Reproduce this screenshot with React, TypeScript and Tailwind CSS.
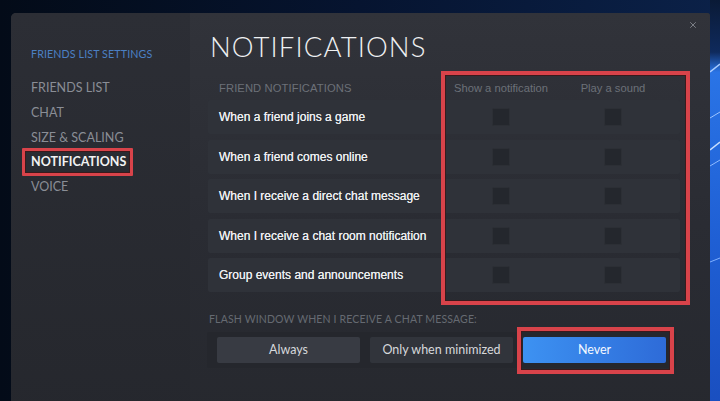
import React from 'react';
import { X } from 'lucide-react';

const menu = ['FRIENDS LIST', 'CHAT', 'SIZE & SCALING', 'NOTIFICATIONS', 'VOICE'];

const rows = [
  'When a friend joins a game',
  'When a friend comes online',
  'When I receive a direct chat message',
  'When I receive a chat room notification',
  'Group events and announcements',
];

const Box: React.FC = () => (
  <div className="w-[18px] h-[18px] rounded-[2px] bg-[#24272d] border border-[#2c2f35]" />
);

const Wallpaper: React.FC = () => (
  <svg width="10" height="401" viewBox="0 0 10 401" className="block">
    <defs>
      <linearGradient id="wp" x1="0" y1="0" x2="0" y2="1">
        <stop offset="0" stopColor="#0a1a36" />
        <stop offset="0.13" stopColor="#0f2a5c" />
        <stop offset="0.18" stopColor="#2a74e6" />
        <stop offset="0.6" stopColor="#1f5fd4" />
        <stop offset="1" stopColor="#1a4fc0" />
      </linearGradient>
    </defs>
    <rect width="10" height="401" fill="url(#wp)" />
    <path d="M0 72 L10 64" stroke="#a9ccff" strokeWidth="1.5" />
    <path d="M0 118 L10 112" stroke="#9cc4ff" strokeWidth="1" />
    <path d="M0 150 L10 142" stroke="#c8defe" strokeWidth="1.5" />
    <path d="M0 166 L10 160" stroke="#8fbaff" strokeWidth="1" />
    <path d="M0 262 L10 258" stroke="#7fb0ff" strokeWidth="1" />
  </svg>
);

const App: React.FC = () => {
  return (
    <div className="w-[720px] h-[401px] overflow-hidden flex bg-gradient-to-r from-[#030b18] via-[#061430] to-[#0b2148] font-['Liberation_Sans',Arial,sans-serif]">
      <div className="w-[11px] shrink-0" />
      <div className="w-[699px] shrink-0 mt-[13px] h-[420px] rounded-tl-[5px] rounded-tr-[3px] overflow-hidden flex bg-[#292b32]">
        {/* sidebar */}
        <div className="w-[179px] shrink-0 bg-gradient-to-b from-[#2c2e35] to-[#25272d] pl-[20px] pt-[34px] font-['Lato',sans-serif]">
          <div className="text-[10.7px] leading-[14px] text-[#4b80c4] tracking-[0.01em]">FRIENDS LIST SETTINGS</div>
          <div className="mt-[15px] flex flex-col">
            {menu.map((m) => (
              <div key={m} className="relative h-[24.8px] flex items-center">
                <span
                  className={
                    m === 'NOTIFICATIONS'
                      ? 'text-[12.5px] font-bold text-[#f2f2f2]'
                      : 'text-[12.5px] text-[#8a8e96]'
                  }
                >
                  {m}
                </span>
                {m === 'NOTIFICATIONS' && (
                  <div className="absolute left-[-9px] top-[-2px] w-[111px] h-[28px] border-[3px] border-[#d8434a] rounded-[1px] shadow-[inset_0_0_0_1px_#3a1a1c]" />
                )}
              </div>
            ))}
          </div>
        </div>

        {/* main */}
        <div className="relative flex-1 bg-gradient-to-b from-[#31333a] via-[#2a2c33] to-[#26282e] pl-[18px] pt-[18px]">
          <X className="absolute right-[12px] top-[7px] w-[10px] h-[10px] text-[#8c8f96]" strokeWidth={2} />
          <div className="h-[32px] flex items-center pl-[2px] text-[27.5px] font-light text-[#eef0f2] tracking-[0.04em] font-['Lato',sans-serif]">
            NOTIFICATIONS
          </div>

          <div className="relative mt-[13px] w-[472px]">
            <div className="grid grid-cols-[1fr_112px_112px] pr-[11px] h-[24px] items-center text-[11.2px] text-[#6c7078]">
              <div className="pl-[11px] uppercase tracking-[0.01em]">Friend Notifications</div>
              <div className="text-center">Show a notification</div>
              <div className="text-center">Play a sound</div>
            </div>
            <div className="flex flex-col gap-[5.5px]">
              {rows.map((r) => (
                <div
                  key={r}
                  className="grid grid-cols-[1fr_112px_112px] pr-[11px] h-[34px] items-center bg-[#2f3239] rounded-[2px]"
                >
                  <div className="pl-[11px] text-[12px] text-[#eceef0] [text-shadow:0_0_0.4px_#eceef0]">{r}</div>
                  <div className="flex justify-center"><Box /></div>
                  <div className="flex justify-center"><Box /></div>
                </div>
              ))}
            </div>
            <div className="absolute left-[233px] top-[-5px] w-[249px] h-[234px] border-[4px] border-[#d8434a] shadow-[inset_0_0_0_1px_#3a1a1c]" />
          </div>

          <div className="mt-[21px] pl-[1px] h-[14px] flex items-center text-[10.5px] text-[#666a72] font-['Lato',sans-serif] tracking-[0.015em]">
            FLASH WINDOW WHEN I RECEIVE A CHAT MESSAGE:
          </div>
          <div className="relative mt-[5px] -ml-[1px] w-[469px] h-[36px] bg-[#25272d] rounded-[2px] px-[10px] flex items-center gap-[10px] font-['Lato',sans-serif] text-[12.5px]">
            <div className="w-[143px] h-[26px] flex items-center justify-center bg-[#383b43] text-[#d6d8db] rounded-[2px]">Always</div>
            <div className="w-[143px] h-[26px] flex items-center justify-center bg-[#31343b] text-[#d6d8db] rounded-[2px]">Only when minimized</div>
            <div className="w-[143px] h-[26px] flex items-center justify-center bg-gradient-to-r from-[#3d92f2] to-[#2e6bd8] text-[#f4f8ff] rounded-[2px]">Never</div>
            <div className="absolute left-[310px] top-[-5px] w-[157px] h-[47px] border-[4px] border-[#d8434a] shadow-[inset_0_0_0_1px_#3a1a1c]" />
          </div>
        </div>
      </div>
      <Wallpaper />
    </div>
  );
};

export default App;
